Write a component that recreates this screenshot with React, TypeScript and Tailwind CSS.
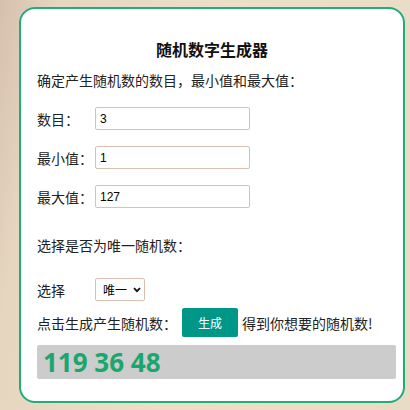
import { useState } from "react"

const cjk = "font-['Noto_Sans_CJK_SC','Noto_Sans',sans-serif]"

function Field({ label, value }: { label: string; value: string }) {
  return (
    <div className="flex items-center h-[23px]">
      <span className="w-[58px] text-[14px] leading-[20px] text-[#222]">{label}</span>
      <input
        defaultValue={value}
        className="w-[155px] h-[23px] border border-[#dcbfb0] rounded-[2px] px-[4px] text-[12px] text-black font-['Liberation_Sans',Arial,sans-serif] outline-none"
      />
    </div>
  )
}

export default function App() {
  const [nums] = useState("119 36 48")

  return (
    <div className={`w-[410px] h-[410px] bg-[linear-gradient(100deg,#d6bfae_0%,#e6d6c0_12%,#ecdfc9_50%,#e9dcc6_100%)] pl-[19px] pr-[5px] pt-[7px] pb-[7px] ${cjk}`}>
      <div className="h-full bg-white border-2 border-[#22ad78] rounded-[16px] pt-[30px]">
        <h1 className="text-center text-[16px] leading-[20px] font-bold text-[#111]">随机数字生成器</h1>

        <div className="pl-[16px] pr-[7px]">
          <p className="mt-[11px] text-[14px] leading-[20px] text-[#222]">确定产生随机数的数目，最小值和最大值：</p>

          <div className="mt-[17px] flex flex-col gap-[16px]">
            <Field label="数目：" value="3" />
            <Field label="最小值：" value="1" />
            <Field label="最大值：" value="127" />
          </div>

          <p className="mt-[27px] text-[14px] leading-[20px] text-[#222]">选择是否为唯一随机数：</p>

          <div className="mt-[23px] flex items-center h-[23px]">
            <span className="w-[58px] text-[14px] leading-[20px] text-[#222]">选择</span>
            <div className="w-[50px] h-[23px] border border-[#dcbfb0] rounded-[2px] flex items-center pl-[7px] gap-[6px] whitespace-nowrap">
              <span className="text-[12px] leading-[16px] text-black">唯一</span>
              <svg width="8" height="6" viewBox="0 0 8 6" className="shrink-0">
                <path d="M1 1.2 L4 4.2 L7 1.2" fill="none" stroke="#111" strokeWidth="1.8" />
              </svg>
            </div>
          </div>

          <div className="mt-[7px] flex items-center h-[29px]">
            <span className="text-[14px] leading-[20px] text-[#222]">点击生成产生随机数：</span>
            <button className="ml-[5px] w-[56px] h-[29px] bg-[#009688] rounded-[2px] text-white text-[12px]">生成</button>
            <span className="ml-[4px] text-[14px] leading-[20px] text-[#222]">得到你想要的随机数!</span>
          </div>

          <div className="mt-[8px] h-[34px] bg-[#cccccc] rounded-[2px] flex items-center pl-[6px]">
            <span className="text-[26px] leading-[30px] font-bold text-[#1aa66e] font-['Open_Sans','Noto_Sans',sans-serif]">{nums}</span>
          </div>
        </div>
      </div>
    </div>
  )
}
